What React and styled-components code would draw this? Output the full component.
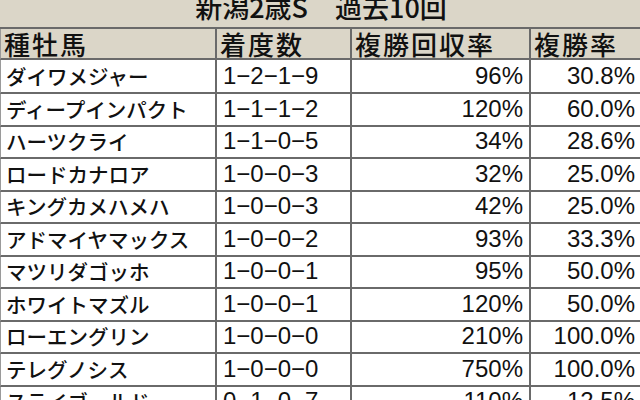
import React from "react";
import styled, { createGlobalStyle } from "styled-components";

const GlobalStyle = createGlobalStyle`
  html, body {
    margin: 0;
    padding: 0;
    background: #ffffff;
  }
  body {
    width: 640px;
    height: 400px;
    overflow: hidden;
  }
`;

const Sheet = styled.div`
  width: 642px;
  height: 400px;
  overflow: hidden;
  background: #ffffff;
  color: #111111;
  font-family: "Liberation Sans", "Noto Sans CJK JP", sans-serif;
`;

const Title = styled.div`
  height: 29px;
  background: #dbd6c8;
  border-bottom: 2px solid #6a6a6a;
  box-sizing: border-box;
  display: flex;
  justify-content: center;
  align-items: flex-end;
  overflow: hidden;
`;

const TitleText = styled.span`
  font-family: "Noto Sans CJK JP", sans-serif;
  font-size: 27px;
  font-weight: 500;
  line-height: 27px;
  margin-bottom: 7px;
`;

const Row = styled.div`
  display: grid;
  grid-template-columns: 216px 135px 179px 112px;
  height: ${(p) => p.h}px;
  background: ${(p) => (p.head ? "#dbd6c8" : "#ffffff")};
  border-bottom: 2px solid #6a6a6a;
  border-left: 1px solid #9a9a9a;
  box-sizing: border-box;
`;

const Cell = styled.div`
  display: flex;
  align-items: center;
  justify-content: ${(p) => (p.right ? "flex-end" : "flex-start")};
  padding: 0 ${(p) => (p.right ? "6px" : "0")} 0 ${(p) => (p.right ? "0" : "6px")};
  border-right: 2px solid #6a6a6a;
  box-sizing: border-box;
  white-space: nowrap;
  overflow: hidden;
`;

const HeadText = styled.span`
  font-family: "Noto Sans CJK JP", sans-serif;
  font-size: 26px;
  font-weight: 500;
  letter-spacing: 2px;
  line-height: 1;
  margin-left: -3px;
`;

const NameText = styled.span`
  font-family: "Noto Sans CJK JP", sans-serif;
  font-size: 20.5px;
  font-weight: 500;
  line-height: 1.2;
  margin-left: -1px;
`;

const NumText = styled.span`
  font-family: "Liberation Sans", sans-serif;
  font-size: 24px;
  line-height: 1.2;
`;

const rows = [
  ["ダイワメジャー", "1-2-1-9", "96%", "30.8%"],
  ["ディープインパクト", "1-1-1-2", "120%", "60.0%"],
  ["ハーツクライ", "1-1-0-5", "34%", "28.6%"],
  ["ロードカナロア", "1-0-0-3", "32%", "25.0%"],
  ["キングカメハメハ", "1-0-0-3", "42%", "25.0%"],
  ["アドマイヤマックス", "1-0-0-2", "93%", "33.3%"],
  ["マツリダゴッホ", "1-0-0-1", "95%", "50.0%"],
  ["ホワイトマズル", "1-0-0-1", "120%", "50.0%"],
  ["ローエングリン", "1-0-0-0", "210%", "100.0%"],
  ["テレグノシス", "1-0-0-0", "750%", "100.0%"],
  ["ステイゴールド", "0-1-0-7", "110%", "12.5%"],
];

const App = () => {
  return (
    <Sheet>
      <GlobalStyle />
      <Title>
        <TitleText>新潟2歳S　過去10回</TitleText>
      </Title>
      <Row head h={31}>
        <Cell><HeadText>種牡馬</HeadText></Cell>
        <Cell><HeadText>着度数</HeadText></Cell>
        <Cell><HeadText>複勝回収率</HeadText></Cell>
        <Cell><HeadText>複勝率</HeadText></Cell>
      </Row>
      {rows.map((r, i) => (
        <Row key={r[0]} h={i === 0 ? 34 : 32.5}>
          <Cell><NameText>{r[0]}</NameText></Cell>
          <Cell><NumText>{r[1].replace(/-/g, "\u2212")}</NumText></Cell>
          <Cell right><NumText>{r[2]}</NumText></Cell>
          <Cell right><NumText>{r[3]}</NumText></Cell>
        </Row>
      ))}
    </Sheet>
  );
};

export default App;
